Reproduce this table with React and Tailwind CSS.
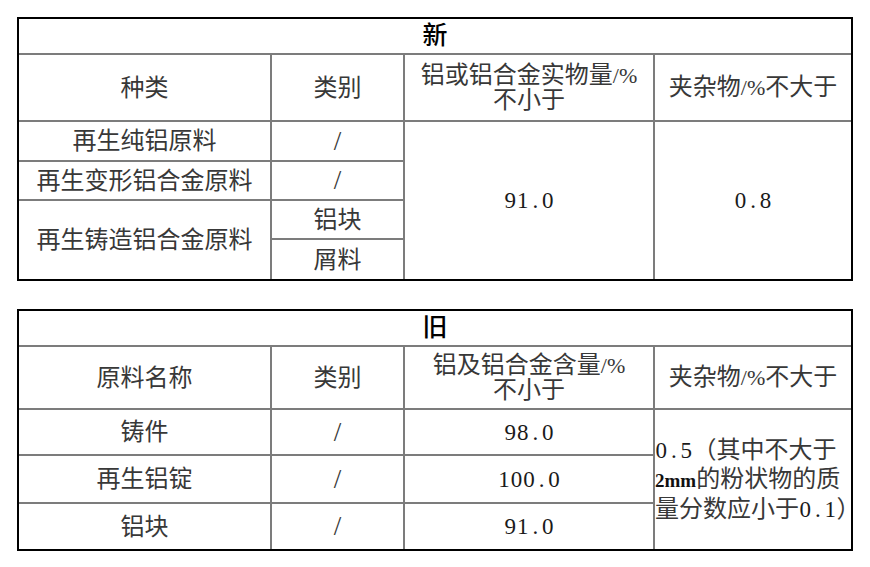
import React from "react";

const N = ({ children, className = "" }) => (
  <span className={`text-[23px] text-[#1a1a1a] ${className}`} style={{ fontFamily: '"Liberation Serif", serif' }}>
    {String(children).split("").map((c, i) => (
      <span key={i} className="inline-block w-[12.5px] text-center">{c}</span>
    ))}
  </span>
);

const S = ({ children }) => (
  <span className="text-[22px]" style={{ fontFamily: '"Liberation Serif", serif' }}>{children}</span>
);

const Slash = () => (
  <span className="text-[27px]" style={{ fontFamily: '"Liberation Serif", serif' }}>/</span>
);

const td = "border-2 border-[#7c7c7c] text-center align-middle p-0 overflow-hidden whitespace-nowrap";

export default function App() {
  return (
    <div
      className="bg-white w-[870px] h-[567px] pt-[17px] pl-[17px] text-[24px] text-[#383838] leading-[26px]"
      style={{ fontFamily: '"Liberation Serif", "Noto Sans CJK SC", serif' }}
    >
      <div className="w-[836px] border-2 border-black">
        <table className="w-full border-collapse border-hidden table-fixed">
          <colgroup>
            <col className="w-[252px]" />
            <col className="w-[133px]" />
            <col className="w-[250px]" />
            <col className="w-[197px]" />
          </colgroup>
          <tbody>
            <tr className="h-[35px]">
              <td colSpan={4} className={`${td} text-black font-medium text-[25px]`}>新</td>
            </tr>
            <tr className="h-[67px]">
              <td className={td}>种类</td>
              <td className={td}>类别</td>
              <td className={`${td} leading-[25px]`}>
                <div>铝或铝合金实物量<S>/%</S></div>
                <div>不小于</div>
              </td>
              <td className={td}>夹杂物<S>/%</S>不大于</td>
            </tr>
            <tr className="h-[40px]">
              <td className={td}>再生纯铝原料</td>
              <td className={td}><Slash /></td>
              <td rowSpan={4} className={td}><N>91.0</N></td>
              <td rowSpan={4} className={td}><N>0.8</N></td>
            </tr>
            <tr className="h-[39px]">
              <td className={td}>再生变形铝合金原料</td>
              <td className={td}><Slash /></td>
            </tr>
            <tr className="h-[39px]">
              <td rowSpan={2} className={td}>再生铸造铝合金原料</td>
              <td className={td}>铝块</td>
            </tr>
            <tr className="h-[40px]">
              <td className={td}>屑料</td>
            </tr>
          </tbody>
        </table>
      </div>

      <div className="w-[836px] border-2 border-black mt-[28px]">
        <table className="w-full border-collapse border-hidden table-fixed">
          <colgroup>
            <col className="w-[252px]" />
            <col className="w-[133px]" />
            <col className="w-[250px]" />
            <col className="w-[197px]" />
          </colgroup>
          <tbody>
            <tr className="h-[35px]">
              <td colSpan={4} className={`${td} text-black font-medium text-[25px]`}>旧</td>
            </tr>
            <tr className="h-[63px]">
              <td className={td}>原料名称</td>
              <td className={td}>类别</td>
              <td className={`${td} leading-[25px]`}>
                <div>铝及铝合金含量<S>/%</S></div>
                <div>不小于</div>
              </td>
              <td className={td}>夹杂物<S>/%</S>不大于</td>
            </tr>
            <tr className="h-[46px]">
              <td className={td}>铸件</td>
              <td className={td}><Slash /></td>
              <td className={td}><N>98.0</N></td>
              <td rowSpan={3} className={`${td} text-left leading-[28px]`}>
                <div className="overflow-hidden"><N>0.5</N>（其中不大于</div>
                <div className="overflow-hidden">
                  <span className="text-[19px] font-bold text-[#111]" style={{ fontFamily: '"Liberation Serif", serif' }}>2mm</span>的粉状物的质
                </div>
                <div className="overflow-hidden">量分数应小于<N>0.1</N>）</div>
              </td>
            </tr>
            <tr className="h-[48px]">
              <td className={td}>再生铝锭</td>
              <td className={td}><Slash /></td>
              <td className={td}><N>100.0</N></td>
            </tr>
            <tr className="h-[46px]">
              <td className={td}>铝块</td>
              <td className={td}><Slash /></td>
              <td className={td}><N>91.0</N></td>
            </tr>
          </tbody>
        </table>
      </div>
    </div>
  );
}
